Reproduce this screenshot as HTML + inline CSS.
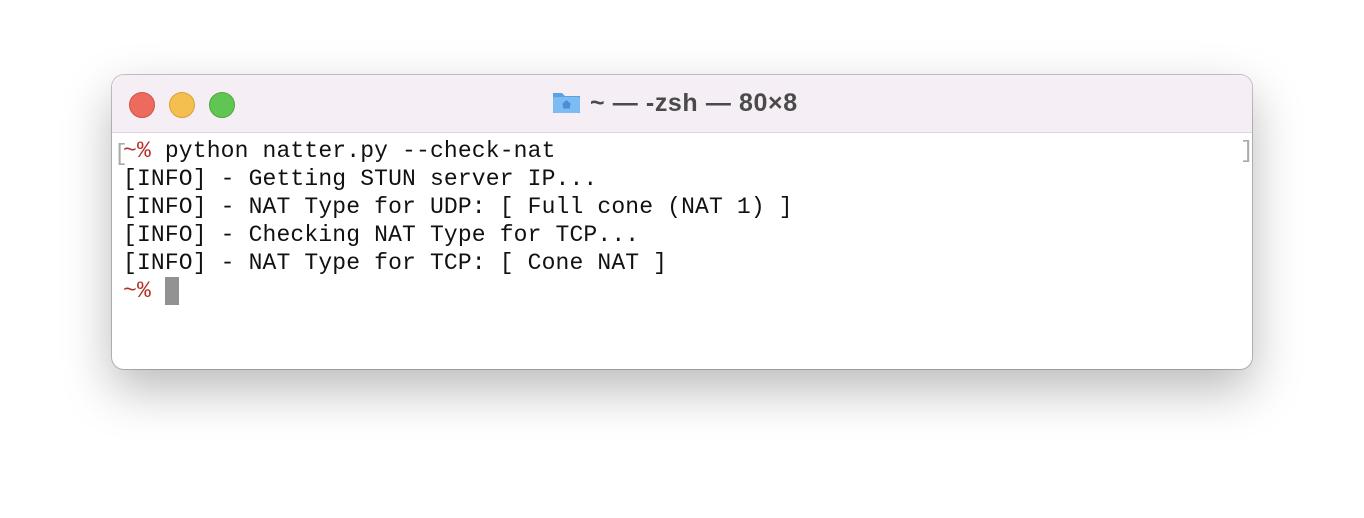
<!DOCTYPE html>
<html><head><style>
body{margin:0;width:1364px;height:518px;background:#fff;position:relative;overflow:hidden}
.win{position:absolute;left:112px;top:75px;width:1140px;height:294px;border-radius:12px;background:#fff;box-shadow:0 20px 50px rgba(0,0,0,0.28),0 0 0 1px rgba(0,0,0,0.22);overflow:hidden}
.tb{position:absolute;left:0;top:0;width:100%;height:57px;background:#f5eff5;border-bottom:1px solid #ddd8dd}
.d{position:absolute;top:17px;width:24px;height:24px;border-radius:50%}
.title{position:absolute;left:478px;top:14px;font:bold 25px "Liberation Sans",sans-serif;color:#4a4a4a;letter-spacing:0.6px}
.t{position:absolute;left:11px;top:62px;font:23px/28px "Liberation Mono",monospace;color:#111;white-space:pre;letter-spacing:0.15px}
.r{color:#b3302a}
.cur{display:inline-block;width:14px;height:28px;background:#929292;vertical-align:top}
</style></head><body>
<div class="win">
<div class="tb">
<div class="d" style="left:17px;background:#ec6a5e;border:0.5px solid #d05449"></div>
<div class="d" style="left:57px;background:#f4bf4f;border:0.5px solid #d6a23a"></div>
<div class="d" style="left:97px;background:#61c554;border:0.5px solid #4ca73f"></div>
<svg style="position:absolute;left:440px;top:15px" width="29" height="25" viewBox="0 0 29 25"><path d="M1 3h9l3 3h15v17H1z" fill="#5aa2e8"/><rect x="1" y="7" width="27" height="16" rx="2" fill="#7cbcf2"/><path d="M14.5 10l-5 4.5h1.5v4h7v-4h1.5z" fill="#4a8fd6"/></svg>
<div class="title">~ — -zsh — 80×8</div>
</div>
<div style="position:absolute;left:2px;top:65px;font:23px/28px 'Liberation Mono',monospace;color:#aaa">[</div>
<div style="position:absolute;left:1128px;top:62px;font:23px/28px 'Liberation Mono',monospace;color:#aaa">]</div>
<div class="t"><span class="r">~%</span> python natter.py --check-nat
[INFO] - Getting STUN server IP...
[INFO] - NAT Type for UDP: [ Full cone (NAT 1) ]
[INFO] - Checking NAT Type for TCP...
[INFO] - NAT Type for TCP: [ Cone NAT ]
<span class="r">~%</span> <span class="cur"></span></div>
</div>
</body></html>
